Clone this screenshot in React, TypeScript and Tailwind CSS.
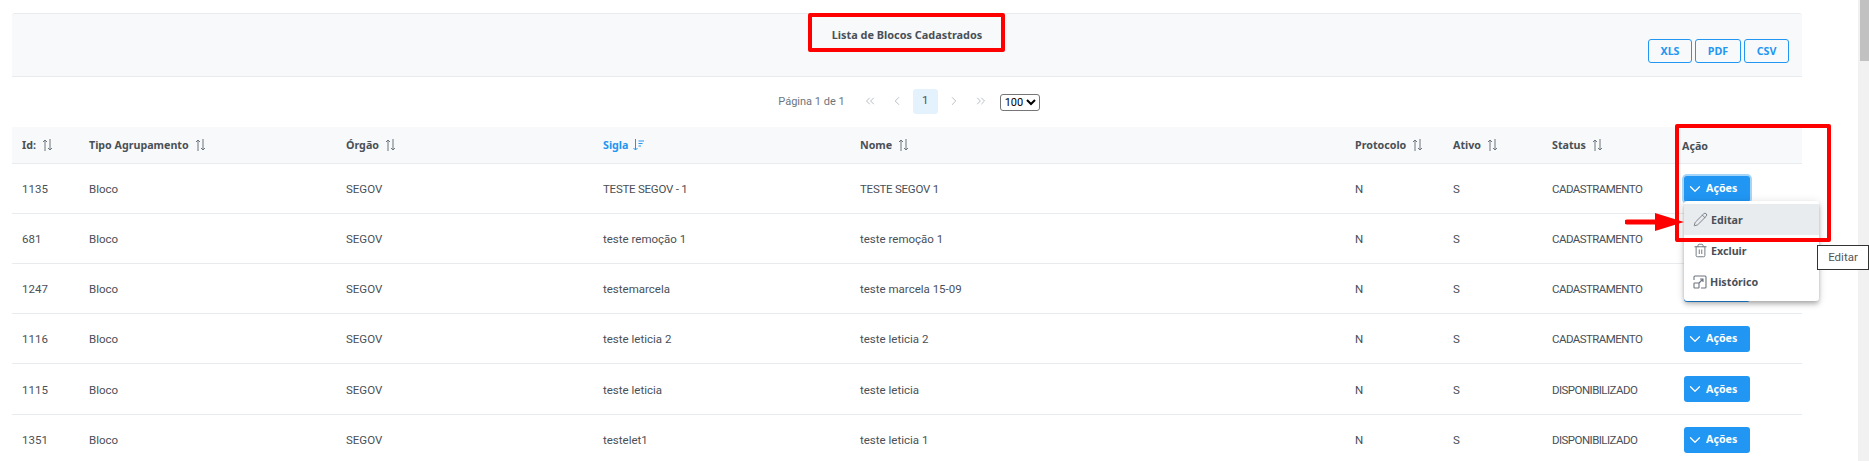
import type { ReactNode } from 'react';
import { ChevronDown, ChevronLeft, ChevronRight, ChevronsLeft, ChevronsRight, Pencil, Trash2 } from 'lucide-react';

const rows = [
  { id: '1135', sigla: 'TESTE SEGOV - 1', nome: 'TESTE SEGOV 1', status: 'CADASTRAMENTO', caps: true },
  { id: '681', sigla: 'teste remoção 1', nome: 'teste remoção 1', status: 'CADASTRAMENTO' },
  { id: '1247', sigla: 'testemarcela', nome: 'teste marcela 15-09', status: 'CADASTRAMENTO' },
  { id: '1116', sigla: 'teste leticia 2', nome: 'teste leticia 2', status: 'CADASTRAMENTO' },
  { id: '1115', sigla: 'teste leticia', nome: 'teste leticia', status: 'DISPONIBILIZADO' },
  { id: '1351', sigla: 'testelet1', nome: 'teste leticia 1', status: 'DISPONIBILIZADO' },
];

function SortIcon() {
  return (
    <svg width="11" height="12" viewBox="0 0 11 12" fill="none" stroke="#6c757d" strokeWidth="1" className="inline-block ml-[6px] -mt-0.5">
      <path d="M3 12V1M1 3L3 1L5 3M8 0V11M6 9L8 11L10 9" />
    </svg>
  );
}

function SortedIcon() {
  return (
    <svg width="11" height="12" viewBox="0 0 11 12" fill="none" stroke="#2196f3" strokeWidth="1" className="inline-block ml-[5px] -mt-0.5">
      <path d="M2.5 0V11M0.5 9L2.5 11L4.5 9M5.5 2H11M5.5 4.5H9.5M5.5 7H8" />
    </svg>
  );
}

function HistoryIcon() {
  return (
    <svg width="14" height="14" viewBox="0 0 14 14" fill="none" stroke="#6c757d" strokeWidth="1.1">
      <path d="M1 5V2A1 1 0 0 1 2 1H12A1 1 0 0 1 13 2V12A1 1 0 0 1 12 13H8" />
      <rect x="1" y="8" width="5" height="5" rx="0.5" />
      <path d="M6 8L10 4M7 4H10V7" />
    </svg>
  );
}

function Th({ label, active }: { label: string; active?: boolean }) {
  return (
    <th className={`px-2.5 pt-[2px] text-left font-bold text-[10.7px] border-b border-[#e9ecef] ${active ? 'text-[#2196f3]' : 'text-[#495057]'}`}>
      <span className="font-['Noto_Sans',sans-serif]">{label}</span>
      {active ? <SortedIcon /> : <SortIcon />}
    </th>
  );
}

function ExportButton({ label, width }: { label: string; width: string }) {
  return (
    <button className={`h-6 rounded-[3px] border border-[#2196f3] bg-transparent text-[#2196f3] font-bold text-[10.7px] font-['Noto_Sans',sans-serif] ${width}`}>
      {label}
    </button>
  );
}

function MenuItem({ icon, label, active }: { icon: ReactNode; label: string; active?: boolean }) {
  return (
    <div className={`h-[31px] flex items-center gap-[3px] pl-[9px] font-bold text-[10.7px] font-['Noto_Sans',sans-serif] text-[#495057] ${active ? 'bg-[#e9ecef]' : ''}`}>
      {icon}
      <span className="mt-[2px]">{label}</span>
    </div>
  );
}

export default function App() {
  return (
    <div className="relative h-[461px] overflow-hidden bg-white text-[11.5px] text-[#495057] font-['Roboto','Noto_Sans',sans-serif]">
      <div className="flex h-full">
        <div className="flex-1 pt-[13px] pl-3 pr-[56px]">
          {/* Header */}
          <div className="relative h-[64px] bg-[#f8f9fa] border-y border-[#e9ecef] rounded-t-[3px] pt-[13px]">
            <p className="text-center font-bold text-[10.9px] font-['Noto_Sans',sans-serif] text-[#495057]">Lista de Blocos Cadastrados</p>
            <div className="absolute right-[13px] top-[25px] flex gap-[3px]">
              <ExportButton label="XLS" width="w-[44px]" />
              <ExportButton label="PDF" width="w-[46px]" />
              <ExportButton label="CSV" width="w-[45px]" />
            </div>
          </div>

          {/* Paginator */}
          <div className="h-[50px] flex items-center justify-center pl-[4px] pb-[2px] text-[#6c757d]">
            <span className="mr-[18px] mt-[3px] text-[11px]">Página 1 de 1</span>
            <ChevronsLeft size={14} strokeWidth={1.2} className="text-[#9aa3ab] mr-[13px]" />
            <ChevronLeft size={14} strokeWidth={1.2} className="text-[#9aa3ab] mr-[9px]" />
            <span className="w-[25px] h-[25px] rounded-[3px] bg-[#e3f2fd] text-[#495057] flex items-center justify-center">1</span>
            <ChevronRight size={14} strokeWidth={1.2} className="text-[#9aa3ab] ml-[9px]" />
            <ChevronsRight size={14} strokeWidth={1.2} className="text-[#9aa3ab] ml-[13px]" />
            <select className="ml-[12px] mt-[2px] w-10 h-[17px] p-0 rounded-[3px] border border-[#767676] text-black text-[11px] leading-none appearance-auto">
              <option>100</option>
            </select>
          </div>

          {/* Table */}
          <table className="w-full table-fixed border-collapse">
            <colgroup>
              <col className="w-[67px]" />
              <col className="w-[257px]" />
              <col className="w-[257px]" />
              <col className="w-[257px]" />
              <col className="w-[495px]" />
              <col className="w-[98px]" />
              <col className="w-[99px]" />
              <col className="w-[130px]" />
              <col className="w-[130px]" />
            </colgroup>
            <thead>
              <tr className="h-9 bg-[#f8f9fa]">
                <Th label="Id:" />
                <Th label="Tipo Agrupamento" />
                <Th label="Órgão" />
                <Th label="Sigla" active />
                <Th label="Nome" />
                <Th label="Protocolo" />
                <Th label="Ativo" />
                <Th label="Status" />
                <th className="px-2.5 pt-[2px] text-left font-bold text-[10.7px] font-['Noto_Sans',sans-serif] border-b border-[#e9ecef]">Ação</th>
              </tr>
            </thead>
            <tbody>
              {rows.map((r, i) => (
                <tr key={r.id} className={`border-b border-[#e9ecef] ${i === 4 ? 'h-[51px]' : 'h-[50px]'}`}>
                  <td className="px-2.5 pt-[4px]">{r.id}</td>
                  <td className="px-2.5 pt-[4px]">Bloco</td>
                  <td className="px-2.5 pt-[4px]">SEGOV</td>
                  <td className={`px-2.5 pt-[4px] ${r.caps ? 'tracking-[-0.25px]' : ''}`}>{r.sigla}</td>
                  <td className={`px-2.5 pt-[4px] ${r.caps ? 'tracking-[-0.25px]' : ''}`}>{r.nome}</td>
                  <td className="px-2.5 pt-[4px]">N</td>
                  <td className="px-2.5 pt-[4px]">S</td>
                  <td className="px-2.5 pt-[4px] tracking-[-0.55px]">{r.status}</td>
                  <td className="px-2.5">
                    <button
                      className={`ml-[2px] mt-[1px] w-[66px] h-[26px] flex items-center gap-[2px] pl-[2px] rounded-[3px] bg-[#2196f3] text-white font-bold text-[10.7px] font-['Noto_Sans',sans-serif] ${i === 0 ? 'ring-2 ring-[#a6d5fa]' : ''}`}
                    >
                      <ChevronDown size={18} strokeWidth={1.7} />
                      Ações
                    </button>
                  </td>
                </tr>
              ))}
            </tbody>
          </table>
        </div>

        {/* Scrollbar */}
        <div className="w-[11px] bg-[#f1f1f1] pl-[2px]">
          <div className="h-[61px] bg-[#c1c1c1]" />
        </div>
      </div>

      {/* Dropdown menu */}
      <div className="absolute left-[1684px] top-[201px] w-[135px] h-[100px] pt-[3px] rounded-[3px] bg-white shadow-[0_2px_4px_-1px_rgba(0,0,0,0.2),0_4px_5px_0_rgba(0,0,0,0.14),0_1px_10px_0_rgba(0,0,0,0.12)]">
        <MenuItem active label="Editar" icon={<Pencil size={15} strokeWidth={1.4} className="text-[#6c757d]" />} />
        <MenuItem label="Excluir" icon={<Trash2 size={15} strokeWidth={1.5} className="text-[#6c757d]" />} />
        <MenuItem label="Histórico" icon={<HistoryIcon />} />
      </div>

      {/* Tooltip */}
      <div className="absolute left-[1817px] top-[245px] w-[52px] h-[25px] bg-white border border-[#333] flex items-center justify-center text-[#555]">
        Editar
      </div>

      {/* Red annotations */}
      <div className="absolute left-[808px] top-[13px] w-[197px] h-[39px] border-4 border-[#ff0000] rounded-[2px]" />
      <div className="absolute left-[1675px] top-[124px] w-[156px] h-[118px] border-4 border-[#ff0000] rounded-[2px]" />
      <svg className="absolute left-[1625px] top-[212px]" width="60" height="20" viewBox="0 0 60 20">
        <path d="M2 10H32" stroke="#ff0000" strokeWidth="5" strokeLinecap="round" />
        <path d="M30 1L59 10L30 19Z" fill="#ff0000" />
      </svg>
    </div>
  );
}
